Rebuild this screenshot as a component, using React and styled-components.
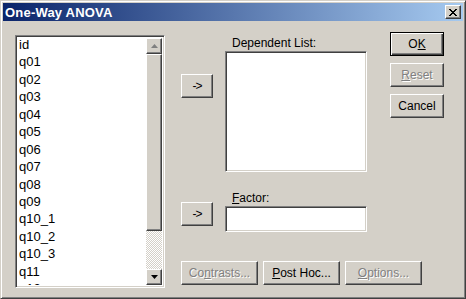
import React from "react";
import styled, { createGlobalStyle, css } from "styled-components";

const GlobalStyle = createGlobalStyle`
  html, body {
    margin: 0;
    padding: 0;
    background: #d4d0c8;
  }
  body {
    font-family: "Liberation Sans", Arial, sans-serif;
    font-size: 12px;
    color: #000;
  }
`;

const variables = [
  "id", "q01", "q02", "q03", "q04", "q05", "q06", "q07", "q08", "q09",
  "q10_1", "q10_2", "q10_3", "q11", "q12",
];

const raised = css`
  background: #d4d0c8;
  border: 1px solid;
  border-color: #fff #404040 #404040 #fff;
  box-shadow: inset -1px -1px 0 #808080, inset 1px 1px 0 #d4d0c8;
`;

const sunken = css`
  background: #fff;
  border: 1px solid;
  border-color: #808080 #fff #fff #808080;
  box-shadow: inset 1px 1px 0 #404040, inset -1px -1px 0 #d4d0c8;
`;

const App = () => {
  return (
    <>
      <GlobalStyle />
      <Window>
        <TitleBar>
          <Title>One-Way ANOVA</Title>
          <CloseButton>
            <svg width="8" height="7" viewBox="0 0 8 7">
              <path d="M0 0 L7 7 M1 0 L8 7 M7 0 L0 7 M8 0 L1 7" stroke="#000" strokeWidth="1" />
            </svg>
          </CloseButton>
        </TitleBar>
        <Body>
          <SourceList>
            <Items>
              {variables.map((v) => (
                <Item key={v}>{v}</Item>
              ))}
            </Items>
            <ScrollBar>
              <ScrollButton>
                <svg width="7" height="4" viewBox="0 0 7 4">
                  <path d="M3.5 0 L7 4 L0 4 Z" fill="#808080" />
                </svg>
              </ScrollButton>
              <Thumb />
              <Track />
              <ScrollButton>
                <svg width="7" height="4" viewBox="0 0 7 4">
                  <path d="M0 0 L7 0 L3.5 4 Z" fill="#000" />
                </svg>
              </ScrollButton>
            </ScrollBar>
          </SourceList>

          <Main>
            <TopArea>
              <Targets>
                <TargetRow>
                  <ArrowButton $offset={53}>-&gt;</ArrowButton>
                  <FieldGroup $offset={15}>
                    <Label>Dependent List:</Label>
                    <Field $height={121} />
                  </FieldGroup>
                </TargetRow>
                <TargetRow $gap={19}>
                  <ArrowButton $offset={11}>-&gt;</ArrowButton>
                  <FieldGroup>
                    <Label>
                      <u>F</u>actor:
                    </Label>
                    <Field $height={26} />
                  </FieldGroup>
                </TargetRow>
              </Targets>
              <Actions>
                <DialogButton $default>
                  O<u>K</u>
                </DialogButton>
                <DialogButton $disabled>
                  <u>R</u>eset
                </DialogButton>
                <DialogButton>Cancel</DialogButton>
              </Actions>
            </TopArea>
            <BottomBar>
              <WideButton $disabled>
                Co<u>n</u>trasts...
              </WideButton>
              <WideButton>
                <u>P</u>ost Hoc...
              </WideButton>
              <WideButton $disabled>
                <u>O</u>ptions...
              </WideButton>
            </BottomBar>
          </Main>
        </Body>
      </Window>
    </>
  );
};

export default App;

const Window = styled.div`
  width: 466px;
  height: 299px;
  box-sizing: border-box;
  padding: 2px;
  background: #d4d0c8;
  border: 1px solid;
  border-color: #d4d0c8 #404040 #404040 #d4d0c8;
  box-shadow: inset 1px 1px 0 #fff, inset -1px -1px 0 #808080;
  overflow: hidden;
`;

const TitleBar = styled.div`
  height: 18px;
  display: flex;
  align-items: center;
  justify-content: space-between;
  padding: 0 2px 0 2px;
  background: linear-gradient(to right, #0a246a, #a6caf0);
`;

const Title = styled.span`
  color: #fff;
  font-weight: bold;
  font-size: 13px;
  letter-spacing: 0.2px;
`;

const CloseButton = styled.div`
  ${raised};
  width: 16px;
  height: 14px;
  box-sizing: border-box;
  display: flex;
  align-items: center;
  justify-content: center;
`;

const Body = styled.div`
  display: flex;
  align-items: flex-start;
  padding-left: 12px;
`;

const SourceList = styled.div`
  ${sunken};
  margin-top: 14px;
  width: 150px;
  height: 253px;
  box-sizing: border-box;
  padding: 2px;
  display: flex;
  overflow: hidden;
`;

const Items = styled.div`
  flex: 1;
  overflow: hidden;
  padding-left: 1px;
`;

const Item = styled.div`
  font-size: 13px;
  line-height: 17.45px;
  height: 17.45px;
  margin-top: 0;
  white-space: nowrap;
  position: relative;
  top: -2px;
`;

const ScrollBar = styled.div`
  width: 16px;
  display: flex;
  flex-direction: column;
`;

const ScrollButton = styled.div`
  ${raised};
  width: 16px;
  height: 16px;
  box-sizing: border-box;
  display: flex;
  align-items: center;
  justify-content: center;
`;

const Thumb = styled.div`
  ${raised};
  height: 177px;
  box-sizing: border-box;
`;

const Track = styled.div`
  flex: 1;
  background-color: #eceae6;
  background-image: repeating-conic-gradient(#fff 0 25%, #d4d0c8 0 50%);
  background-size: 2px 2px;
`;

const Main = styled.div`
  margin-left: 16px;
  display: flex;
  flex-direction: column;
`;

const TopArea = styled.div`
  display: flex;
  align-items: flex-start;
`;

const Targets = styled.div`
  display: flex;
  flex-direction: column;
  width: 186px;
`;

const TargetRow = styled.div`
  display: flex;
  align-items: flex-start;
  gap: 12px;
  margin-top: ${(p) => p.$gap || 0}px;
`;

const ArrowButton = styled.div`
  ${raised};
  margin-top: ${(p) => p.$offset}px;
  width: 32px;
  height: 24px;
  box-sizing: border-box;
  display: flex;
  align-items: center;
  justify-content: center;
  font-size: 12px;
  letter-spacing: -1px;
`;

const FieldGroup = styled.div`
  display: flex;
  flex-direction: column;
  margin-top: ${(p) => p.$offset || 0}px;
`;

const Label = styled.div`
  padding-left: 7px;
  line-height: 14px;
  height: 14px;
  margin-bottom: 1px;
`;

const Field = styled.div`
  ${sunken};
  width: 142px;
  height: ${(p) => p.$height}px;
  box-sizing: border-box;
`;

const Actions = styled.div`
  display: flex;
  flex-direction: column;
  gap: 7px;
  margin-top: 11px;
  margin-left: 23px;
`;

const buttonText = css`
  display: flex;
  align-items: center;
  justify-content: center;
  box-sizing: border-box;
  font-size: 12px;
  color: ${(p) => (p.$disabled ? "#808080" : "#000")};
  text-shadow: ${(p) => (p.$disabled ? "1px 1px 0 #fff" : "none")};
`;

const DialogButton = styled.div`
  ${raised};
  ${buttonText};
  width: 54px;
  height: 24px;
  ${(p) =>
    p.$default &&
    css`
      border: 1px solid #000;
      box-shadow: inset 1px 1px 0 #fff, inset -1px -1px 0 #404040,
        inset -2px -2px 0 #808080;
    `}
`;

const BottomBar = styled.div`
  display: flex;
  gap: 5px;
  margin-top: 29px;
`;

const WideButton = styled.div`
  ${raised};
  ${buttonText};
  width: 77px;
  height: 24px;
`;
